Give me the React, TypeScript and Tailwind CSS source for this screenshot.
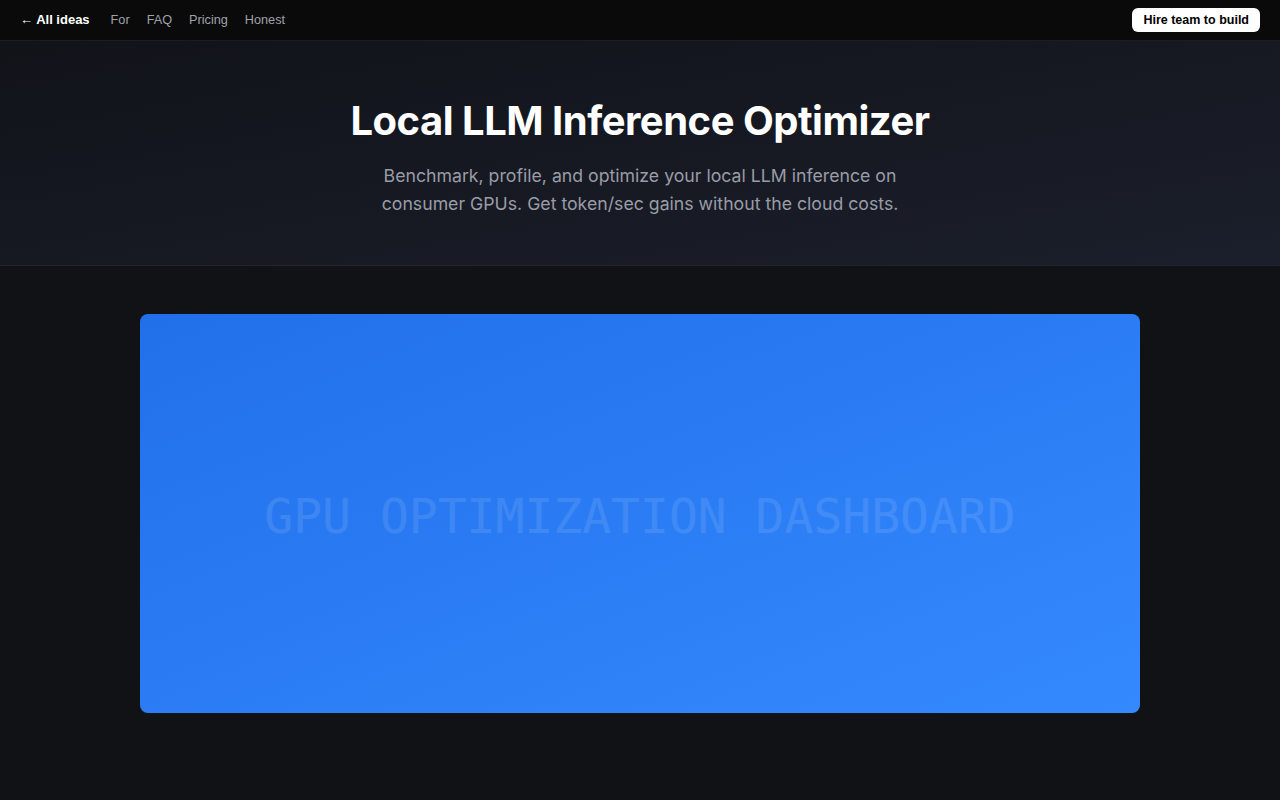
import React from 'react';

const navLinks = ['For', 'FAQ', 'Pricing', 'Honest'];

const App: React.FC = () => {
    return (
        <div className="min-h-screen bg-[#111216] font-['Liberation_Sans',Arial,sans-serif]">
            <nav className="h-[41px] bg-[#0a0a0a] border-b border-[#1c1d22] flex items-center justify-between px-5">
                <div className="flex items-baseline gap-[17px] text-[13px] leading-[20px]">
                    <a className="text-white font-bold pr-[4px]">← All ideas</a>
                    {navLinks.map((link) => (
                        <a key={link} className="text-[#a1a1aa] text-[12.7px]">{link}</a>
                    ))}
                </div>
                <button className="bg-white text-black font-bold text-[12.5px] rounded-md px-[11px] h-6 leading-6">
                    Hire team to build
                </button>
            </nav>

            <header className="bg-gradient-to-br from-[#111319] to-[#1b1f2b] border-b border-[#23252d] h-[225px] flex flex-col items-center pt-[56px]">
                <h1 className="text-white text-[40px] font-bold leading-[48px] tracking-[-0.5px] font-['Inter','DejaVu_Sans',sans-serif]">
                    Local LLM Inference Optimizer
                </h1>
                <p className="mt-[17px] max-w-[560px] text-center text-[17.7px] leading-[28px] text-[#9a9ca6] font-['Inter','DejaVu_Sans',sans-serif]">
                    Benchmark, profile, and optimize your local LLM inference on consumer GPUs. Get token/sec gains without the cloud costs.
                </p>
            </header>

            <main className="flex justify-center pt-[48px] pb-[87px]">
                <div className="w-[1000px] h-[399px] rounded-lg bg-gradient-to-br from-[#2170ea] to-[#3589fe] flex items-center justify-center">
                    <span className="font-['DejaVu_Sans_Mono','Liberation_Mono',monospace] text-[48px] text-white/10 pt-[4px]">
                        GPU OPTIMIZATION DASHBOARD
                    </span>
                </div>
            </main>
        </div>
    );
};

export default App;
